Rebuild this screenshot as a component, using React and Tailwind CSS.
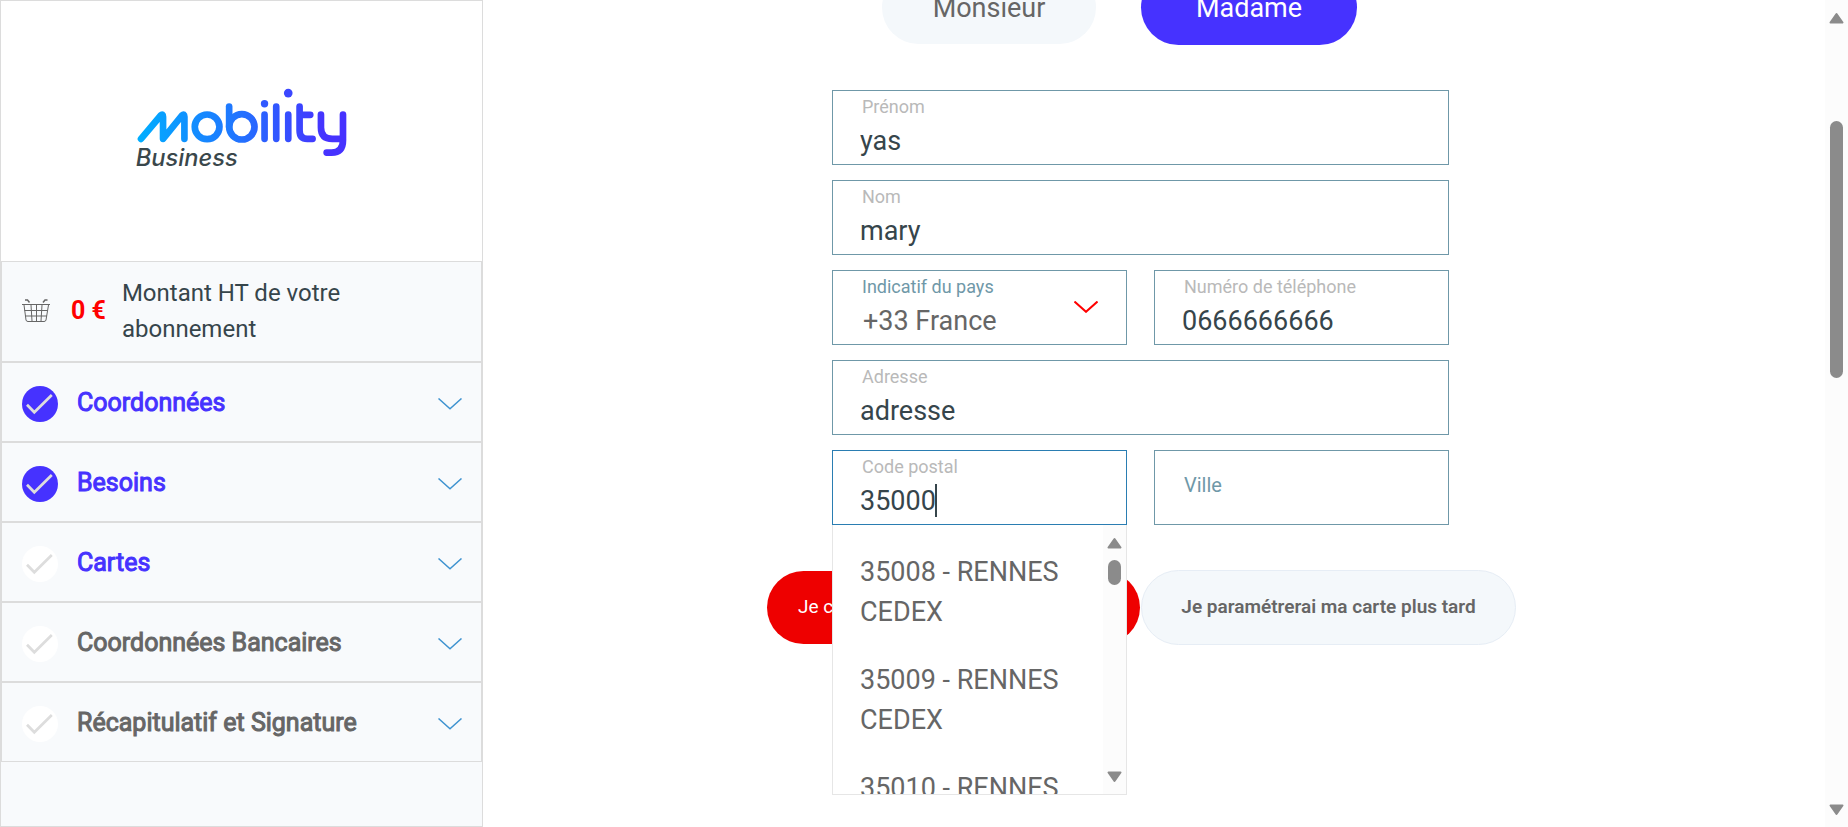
const steps = [
  { title: "Coordonnées", done: true, reached: true },
  { title: "Besoins", done: true, reached: true },
  { title: "Cartes", done: false, reached: true },
  { title: "Coordonnées Bancaires", done: false, reached: false },
  { title: "Récapitulatif et Signature", done: false, reached: false },
];

const cities = ["35008 - RENNES CEDEX", "35009 - RENNES CEDEX", "35010 - RENNES CEDEX"];

function Logo() {
  return (
    <svg viewBox="40 45 650 260" className="h-[87px] w-[217px]" role="img" aria-label="Mobility Business">
      <defs>
        <linearGradient id="brand" gradientUnits="userSpaceOnUse" x1="54" y1="0" x2="680" y2="0">
          <stop offset="0" stopColor="#00aeff" />
          <stop offset="0.45" stopColor="#1f78ff" />
          <stop offset="0.9" stopColor="#4632ff" />
        </linearGradient>
      </defs>
      <g fill="none" stroke="url(#brand)" strokeWidth="20" strokeLinecap="round" strokeLinejoin="round">
        <path d="M64 206 L123 136 Q130 129 130 140 V206 L187 136 Q194 129 194 140 V206" />
        <circle cx="262" cy="170" r="37" />
        <path d="M328 109 V170" />
        <circle cx="366" cy="170" r="38" />
        <path d="M434 133 L434.1 206" />
        <path d="M469 109 L469.1 206" />
        <path d="M505 133 L505.1 206" />
        <path d="M539 109 V180 Q539 206 562 206 H578 M539 134 H571" />
        <path d="M603 133 V172 Q603 206 637 206 H669 M669 133 V210 Q669 247 635 247 H620" />
      </g>
      <circle cx="434" cy="101" r="11" fill="#3159ff" />
      <circle cx="505" cy="69" r="13" fill="#3b47ff" />
      <text x="48" y="288" fontFamily="Inter, sans-serif" fontSize="71" fontWeight="500" fontStyle="italic" fill="#3a474b">
        Business
      </text>
    </svg>
  );
}

function Basket() {
  return (
    <svg viewBox="0 0 28 24" className="h-6 w-7 shrink-0" fill="none" stroke="#666" aria-hidden="true">
      <path d="M0 5.5H28M2 6L4 21Q4.300 22.500 6 22.500H22Q23.700 22.500 24 21L26.500 6M2.500 11.500H25.500M3 17H25M9 6L10 22M14.500 6V22M20 6L19 22" />
      <path d="M3 1H5.500L7.500 3.500M25.500 1H23L21 3.500" strokeWidth="1.500" />
    </svg>
  );
}

function StepMark({ done }) {
  return (
    <svg viewBox="0 0 36 36" className="mt-[3px] size-9 shrink-0" aria-hidden="true">
      <circle cx="18" cy="18" r="18" fill={done ? "#4632ff" : "#fff"} />
      <path d="M5 18.700L12.300 26.300L29.800 9" fill="none" stroke="#ddd" strokeWidth="2.700" />
    </svg>
  );
}

function Chevron({ className, weight }) {
  return (
    <svg viewBox="0 0 24 12" fill="none" stroke="currentColor" strokeWidth={weight} className={className} aria-hidden="true">
      <path d="M0.500 0.500L12 10.800L23.500 0.500" />
    </svg>
  );
}

function Arrow({ down }) {
  return (
    <svg viewBox="0 0 15 12" className={down ? "h-3 w-[15px] shrink-0 rotate-180" : "h-3 w-[15px] shrink-0"} aria-hidden="true">
      <path d="M7.500 2L13.500 10.500H1.500Z" fill="#8b8b8b" stroke="#8b8b8b" strokeWidth="2" strokeLinejoin="round" />
    </svg>
  );
}

function ScrollRail({ thumb }) {
  return (
    <div className="flex w-[23px] shrink-0 flex-col items-center bg-[#fcfcfc] pt-3 pb-[11px]" aria-hidden="true">
      <Arrow />
      <div className={thumb} />
      <div className="flex-1" />
      <Arrow down />
    </div>
  );
}

const labelClass = "block h-6 shrink-0 pl-[29px] text-[18px] leading-6";
const valueClass = "mt-[5px] h-[34px] w-full bg-transparent text-[27px] leading-[34px] outline-none";

function Field({ id, label, value, type = "text", wide, active, children }) {
  return (
    <div
      className={`relative flex h-[75px] flex-col border pt-1 ${active ? "border-[#2a7db2]" : "border-[#6f98a8]"} ${wide ? "col-span-2" : ""}`}
    >
      <label htmlFor={id} className={`${labelClass} text-[#b9b9b9]`}>
        {label}
      </label>
      <input id={id} type={type} defaultValue={value} className={`${valueClass} pl-[27px] text-[#36454b]`} />
      {children}
    </div>
  );
}

export default function App() {
  return (
    <div className="flex h-screen overflow-hidden bg-white font-[Roboto,sans-serif]">
      <aside className="flex w-[483px] shrink-0 flex-col border border-[#dcdcdc] bg-[#f8fafc]">
        <div className="flex h-[260px] shrink-0 items-center justify-center bg-white pb-[5px]">
          <Logo />
        </div>
        <div className="flex h-[101px] shrink-0 items-center border border-[#dcdcdc] pb-px pl-5 text-2xl">
          <Basket />
          <strong className="ml-[21px] text-[25px] font-bold whitespace-nowrap text-[#f00]">0 €</strong>
          <p className="ml-4 w-[240px] leading-9 text-[#36454b]">Montant HT de votre abonnement</p>
        </div>
        <nav className="shrink-0">
          {steps.map((s) => (
            <button
              key={s.title}
              type="button"
              className="flex h-20 w-full items-center border border-[#dcdcdc] pr-[19px] pl-5 text-left text-[25px]"
            >
              <StepMark done={s.done} />
              <span
                className={`ml-[19px] flex-1 pt-px [-webkit-text-stroke:1px] ${s.reached ? "text-[#4632ff]" : "text-[#666]"}`}
              >
                {s.title}
              </span>
              <Chevron weight="1.5" className="mt-[3px] h-3 w-6 text-[#3f93d0]" />
            </button>
          ))}
        </nav>
      </aside>

      <main className="flex min-w-0 flex-1 flex-col items-center overflow-hidden pr-[27px]">
        <div className="-mt-[30px] flex shrink-0 items-center gap-[45px] pr-[42px] text-[27px]">
          <button type="button" className="h-[73px] w-[214px] rounded-full bg-[#f4f8fb] pt-[2px] text-[#666]">
            Monsieur
          </button>
          <button type="button" className="h-[75px] w-[216px] rounded-full bg-[#4632ff] pt-[2px] text-white">
            Madame
          </button>
        </div>

        <form className="mt-[45px] grid w-[617px] max-w-full shrink-0 grid-cols-2 gap-x-[27px] gap-y-[15px]">
          <Field id="prenom" label="Prénom" value="yas" wide />
          <Field id="nom" label="Nom" value="mary" wide />
          <div className="relative flex h-[75px] flex-col border border-[#6f98a8] pt-1">
            <label htmlFor="pays" className={`${labelClass} text-[#6f98a8]`}>
              Indicatif du pays
            </label>
            <select id="pays" className={`${valueClass} appearance-none pl-[30px] text-[#666]`}>
              <option>+33 France</option>
            </select>
            <Chevron weight="2" className="pointer-events-none absolute top-[30px] right-7 h-3 w-6 text-[#f00]" />
          </div>
          <Field id="tel" label="Numéro de téléphone" value="0666666666" type="tel" />
          <Field id="adresse" label="Adresse" value="adresse" wide />
          <Field id="cp" label="Code postal" value="35000" active>
            <span className="absolute top-[33px] left-[102px] h-[33px] w-[2px] bg-[#36454b]" />
            <div className="absolute top-full -right-px -left-px z-10 mt-px flex h-[270px] overflow-hidden border border-t-0 border-[#e6e6e6] bg-white">
              <ul className="flex-1 pt-[13px] text-[27px] leading-10 text-[#666]">
                {cities.map((c) => (
                  <li key={c} className="py-[14px] pr-4 pl-[27px]">
                    {c}
                  </li>
                ))}
              </ul>
              <ScrollRail thumb="mt-[11px] h-[25px] w-[13px] rounded-full bg-[#8b8b8b]" />
            </div>
          </Field>
          <div className="flex h-[75px] border border-[#6f98a8]">
            <input
              type="text"
              aria-label="Ville"
              placeholder="Ville"
              className="w-full bg-transparent pb-[5px] pl-[29px] text-[20px] outline-none placeholder:text-[#6f98a8]"
            />
          </div>
        </form>

        <div className="mt-[45px] flex shrink-0 items-center gap-px pl-[2px] text-[19px]">
          <button type="button" className="h-[73px] w-[373px] rounded-full bg-[#ee0000] px-[31px] text-left text-white">
            Je c
          </button>
          <button
            type="button"
            className="h-[75px] w-[375px] rounded-full border border-[#e6edf5] bg-[#f4f8fb] font-semibold text-[#666]"
          >
            Je paramétrerai ma carte plus tard
          </button>
        </div>
      </main>

      <ScrollRail thumb="mt-[97px] h-[257px] w-[13px] rounded-full bg-[#8b8b8b]" />
    </div>
  );
}
